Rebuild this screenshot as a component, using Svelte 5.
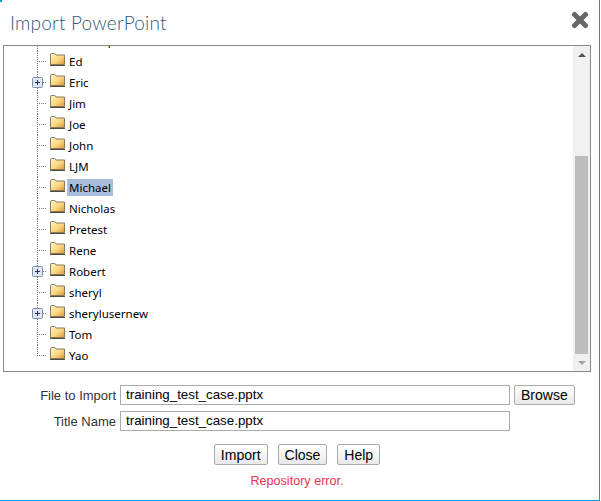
<script>
  // rows visible in the tree; the first one is scrolled mostly out of view
  const folders = [
    { name: 'Christopher' },
    { name: 'Ed' },
    { name: 'Eric', expandable: true },
    { name: 'Jim' },
    { name: 'Joe' },
    { name: 'John' },
    { name: 'LJM' },
    { name: 'Michael', selected: true },
    { name: 'Nicholas' },
    { name: 'Pretest' },
    { name: 'Rene' },
    { name: 'Robert', expandable: true },
    { name: 'sheryl' },
    { name: 'sheryluser' + 'new', expandable: true },
    { name: 'Tom' },
    { name: 'Yao', last: true }
  ]

  let fileName = 'training_test_case.pptx'
  let titleName = 'training_test_case.pptx'
</script>

<svg class="defs" width="0" height="0" aria-hidden="true">
  <defs>
    <linearGradient id="folder-fill" x1="0" y1="0" x2="1" y2="1">
      <stop offset="0" stop-color="#fff4cc" />
      <stop offset="0.55" stop-color="#fbd67f" />
      <stop offset="1" stop-color="#d9963a" />
    </linearGradient>
  </defs>
</svg>

<div class="dialog">
  <span class="corner"></span>
  <header>
    <h1>Import PowerPoint</h1>
    <button class="close" aria-label="Close">
      <svg width="18" height="18" viewBox="0 0 18 18">
        <path d="M3.5 3.5 14.5 14.5M14.5 3.5 3.5 14.5" stroke="#666" stroke-width="5" stroke-linecap="round" />
      </svg>
    </button>
  </header>

  <div class="tree">
    <div class="rows">
      {#each folders as folder}
        <div class="row" class:last={folder.last}>
          <span class="branch"></span>
          {#if folder.expandable}
            <svg class="plus" width="11" height="11" viewBox="0 0 11 11">
              <rect x="0.5" y="0.5" width="10" height="10" rx="1" fill="#dfe6f2" stroke="#7f8fa8" />
              <path d="M3 5.5h5M5.5 3v5" stroke="#1f2f5f" />
            </svg>
          {/if}
          <svg class="folder" width="15" height="13" viewBox="0 0 15 13">
            <path d="M0.5 11.5V1.5q0-1 1-1h3q1 0 1.5 1.5h8.500v9.500z" fill="url(#folder-fill)" stroke="#8a7a58" />
            <path d="M0 12.500h15" stroke="#4f4a40" />
          </svg>
          <span class="label" class:selected={folder.selected}>{folder.name}</span>
        </div>
      {/each}
    </div>
    <div class="scrollbar">
      <span class="arrow up"></span>
      <div class="track"><div class="thumb"></div></div>
      <span class="arrow down"></span>
    </div>
  </div>

  <form>
    <div class="field">
      <label for="file">File to Import</label>
      <input id="file" type="text" bind:value={fileName} />
      <button type="button" class="btn">Browse</button>
    </div>
    <div class="field">
      <label for="title">Title Name</label>
      <input id="title" type="text" bind:value={titleName} />
    </div>
    <div class="actions">
      <button type="button" class="btn">Import</button>
      <button type="button" class="btn">Close</button>
      <button type="button" class="btn">Help</button>
    </div>
    <p class="error">Repository error.</p>
  </form>
</div>

<style>
  :global(body) {
    background: #fff;
  }

  .defs {
    position: absolute;
  }

  .dialog {
    position: relative;
    box-sizing: border-box;
    width: 600px;
    height: 501px;
    background: #fff;
    border-right: 1px solid #0b9bd7;
    border-bottom: 1px solid #0b9bd7;
    font-family: 'Liberation Sans', Arial, sans-serif;
    font-size: 14px;
    overflow: hidden;
  }

  .corner {
    position: absolute;
    top: 0;
    left: 0;
    width: 2px;
    height: 2px;
    background: #0b9bd7;
  }

  header {
    display: flex;
    align-items: center;
    justify-content: space-between;
    height: 45px;
    padding: 0 10px;
  }

  h1 {
    margin: 0;
    font-family: Lato, sans-serif;
    font-size: 19px;
    font-weight: 300;
    letter-spacing: 0.2px;
    color: #34566f;
  }

  .close {
    display: flex;
    margin-top: -6px;
    padding: 0;
    border: none;
    background: none;
  }

  .tree {
    box-sizing: border-box;
    display: flex;
    width: 588px;
    height: 327px;
    margin-left: 3px;
    border: 1px solid #888;
    overflow: hidden;
  }

  .rows {
    flex: 1;
    margin-top: -16px;
    padding-left: 33px;
  }

  .row {
    position: relative;
    display: flex;
    align-items: center;
    height: 21px;
    font-family: 'Noto Sans', sans-serif;
    font-size: 11.5px;
    color: #000;
  }

  .branch {
    align-self: stretch;
    width: 9px;
    margin-right: 4px;
    background:
      repeating-linear-gradient(to bottom, #777 0 1px, transparent 1px 2px) left top / 1px 100% no-repeat,
      repeating-linear-gradient(to right, #777 0 1px, transparent 1px 2px) left 10px / 100% 1px no-repeat;
  }

  .last .branch {
    background:
      repeating-linear-gradient(to bottom, #777 0 1px, transparent 1px 2px) left top / 1px 11px no-repeat,
      repeating-linear-gradient(to right, #777 0 1px, transparent 1px 2px) left 10px / 100% 1px no-repeat;
  }

  .plus {
    position: absolute;
    left: -5px;
    top: 5px;
  }

  .folder {
    flex: none;
    margin-top: -4px;
  }

  .label {
    margin-left: 2px;
    padding: 0 2px;
    line-height: 17px;
  }

  .selected {
    background: #a9bcdc;
  }

  .scrollbar {
    display: flex;
    flex-direction: column;
    align-items: center;
    width: 17px;
    background: #f0f0f0;
  }

  .arrow {
    flex: none;
    width: 0;
    height: 0;
    margin: 7px 0;
    border-left: 4px solid transparent;
    border-right: 4px solid transparent;
  }

  .up {
    border-bottom: 4px solid #505050;
  }

  .down {
    border-top: 4px solid #a3a3a3;
  }

  .track {
    flex: 1;
    width: 100%;
    padding-top: 92px;
  }

  .thumb {
    width: 13px;
    height: 198px;
    margin: 0 auto;
    background: #bdbdbd;
  }

  form {
    padding-top: 13px;
  }

  .field {
    display: flex;
    align-items: center;
    margin-bottom: 6px;
  }

  label {
    width: 116px;
    margin-right: 4px;
    text-align: right;
    font-size: 13px;
    color: #333;
  }

  input {
    box-sizing: border-box;
    width: 390px;
    height: 20px;
    padding: 0 5px 2px;
    border: 1px solid #aaa;
    font-family: inherit;
    font-size: 13.333px;
    color: #000;
  }

  .btn {
    box-sizing: border-box;
    height: 20px;
    margin-left: 4px;
    padding: 0 6px;
    border: 1px solid #aaa;
    border-radius: 2px;
    background: linear-gradient(#fff, #e8e8e8);
    font-family: inherit;
    font-size: 14px;
    color: #000;
  }

  .actions {
    display: flex;
    justify-content: center;
    gap: 10px;
    margin-top: 13px;
    padding-right: 5px;
  }

  .actions .btn {
    height: 21px;
    margin: 0;
  }

  .error {
    margin: 9px 0 0;
    padding-right: 5px;
    text-align: center;
    font-size: 12.6px;
    color: #f0304f;
  }
</style>
